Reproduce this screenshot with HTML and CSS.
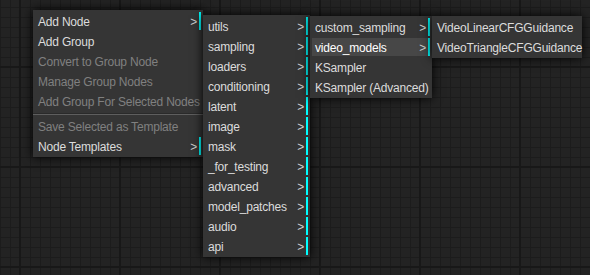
FILE: index.html
```html
<!DOCTYPE html>
<html lang="en">
<head>
    <meta charset="UTF-8">
    <meta name="viewport" content="width=device-width, initial-scale=1.0">
    <title>Context Menu</title>
    <link rel="stylesheet" href="styles.css">
</head>
<body>

<div class="canvas">

    <!-- Menu principal -->
    <div class="menu menu-main">
        <div class="entry submenu">Add Node</div>
        <div class="entry">Add Group</div>
        <div class="entry disabled">Convert to Group Node</div>
        <div class="entry disabled">Manage Group Nodes</div>
        <div class="entry disabled">Add Group For Selected Nodes</div>
        <div class="separator"></div>
        <div class="entry disabled">Save Selected as Template</div>
        <div class="entry submenu">Node Templates</div>
    </div>

    <!-- Catégories -->
    <div class="menu menu-cat">
        <div class="entry submenu">utils</div>
        <div class="entry submenu">sampling</div>
        <div class="entry submenu">loaders</div>
        <div class="entry submenu">conditioning</div>
        <div class="entry submenu">latent</div>
        <div class="entry submenu">image</div>
        <div class="entry submenu">mask</div>
        <div class="entry submenu">_for_testing</div>
        <div class="entry submenu">advanced</div>
        <div class="entry submenu">model_patches</div>
        <div class="entry submenu">audio</div>
        <div class="entry submenu">api</div>
    </div>

    <!-- sampling -->
    <div class="menu menu-sub">
        <div class="entry submenu">custom_sampling</div>
        <div class="entry submenu active">video_models</div>
        <div class="entry">KSampler</div>
        <div class="entry">KSampler (Advanced)</div>
    </div>

    <!-- video_models -->
    <div class="menu menu-leaf">
        <div class="entry">VideoLinearCFGGuidance</div>
        <div class="entry">VideoTriangleCFGGuidance</div>
    </div>

</div>

</body>
</html>
```

FILE: styles.css
```css
body {
    margin: 0;
    padding: 0;
    overflow: hidden;
    font-family: "Liberation Sans", Arial, sans-serif;
}

/* fond quadrillé du graphe */
.canvas {
    position: relative;
    width: 590px;
    height: 275px;
    background-color: #232323;
    background-image:
        linear-gradient(90deg, #181818 2px, transparent 2px),
        linear-gradient(#181818 2px, transparent 2px),
        linear-gradient(90deg, #1c1c1c 1px, transparent 1px),
        linear-gradient(#1c1c1c 1px, transparent 1px);
    background-size: 100px 100px, 100px 100px, 10px 10px, 10px 10px;
    background-position: 19px 0, 0 66px, 0 0, 0 7px;
}

.menu {
    position: absolute;
    box-sizing: border-box;
    background-color: #353535;
    box-shadow: 0 0 10px black;
    font-size: 12px;
    letter-spacing: -0.2px;
    color: #dcdcdc;
}

.menu-main {
    left: 33px;
    top: 10px;
    width: 170px;
}

.menu-cat {
    left: 203px;
    top: 15px;
    width: 107px;
}

.menu-sub {
    left: 310px;
    top: 16px;
    width: 122px;
}

.menu-leaf {
    left: 432px;
    top: 16px;
    width: 150px;
}

.entry {
    position: relative;
    margin: 2px;
    padding: 2px 1px 0 3px;
    line-height: 16px;
    white-space: nowrap;
    cursor: default;
}

.entry.disabled {
    color: #808080;
}

.entry.submenu {
    border-right: 2px solid cyan;
}

.entry.submenu::after {
    content: ">";
    position: absolute;
    top: 2px;
    right: 2px;
    color: #cfcfcf;
}

.entry.active,
.entry:hover {
    background-color: #474747;
    color: #ffffff;
}

.separator {
    height: 0;
    margin: 3px 0 2px 0;
    border-top: 1px solid #2a2a2a;
    border-bottom: 1px solid #5e5e5e;
}
```
